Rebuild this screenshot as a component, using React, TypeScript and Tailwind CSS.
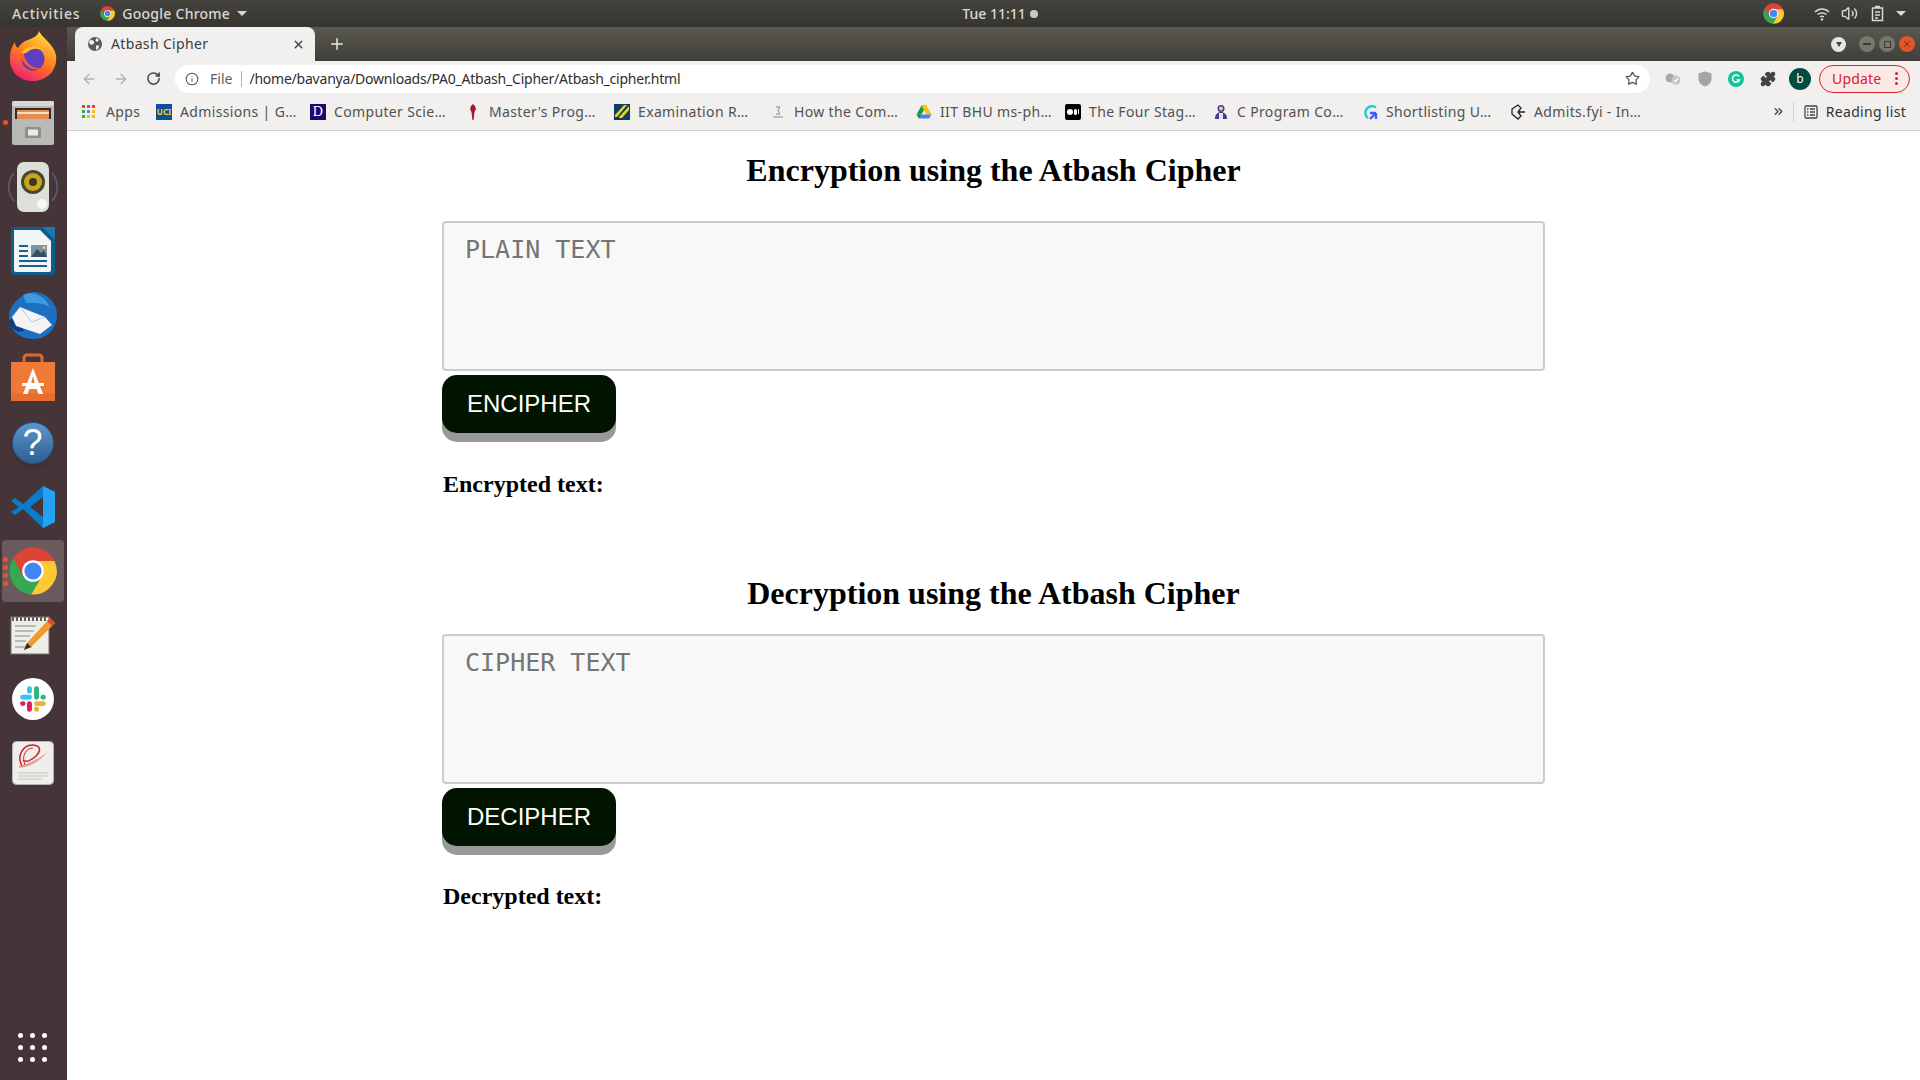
import { useId } from 'react'
import { ArrowLeft, ArrowRight, RotateCw, Star, Info, X, Plus, Puzzle, ChevronsRight, Volume2 } from 'lucide-react'

const ui = "font-['Noto_Sans',sans-serif]"

const ChromeLogo = ({ size }: { size: number }) => (
  <svg width={size} height={size} viewBox="0 0 48 48">
    <path d="M24 14H45.5A23.5 23.5 0 0 0 4.2 11.5L14 29Z" fill="#db4437" />
    <path d="M24 14H45.5A23.5 23.5 0 0 1 22 47.4L33 29Z" fill="#fcc934" />
    <path d="M4.2 11.5A23.5 23.5 0 0 0 22 47.4L33 29H14Z" fill="#34a853" />
    <circle cx="24" cy="24" r="10.8" fill="#fff" />
    <circle cx="24" cy="24" r="8.6" fill="#4285f4" />
  </svg>
)

const Firefox = () => {
  const id = useId()
  return (
    <svg className="mb-[6px]" width="48" height="52" viewBox="0 0 48 52">
      <defs>
        <linearGradient id={id} x1="0.7" y1="0" x2="0.2" y2="1">
          <stop offset="0" stopColor="#ffdf3c" />
          <stop offset="0.5" stopColor="#ff7a1f" />
          <stop offset="1" stopColor="#f0167a" />
        </linearGradient>
      </defs>
      <path d="M30 1C33 8 44 13 47 25C49 40 38 51 24 51C10 51 0 41 1 27C1 21 3 16 6 12C6 15 7 17 9 18C11 14 15 11 19 10C24 8 29 6 30 1Z" fill={`url(#${id})`} />
      <circle cx="24" cy="29" r="11.5" fill="#5f3fc0" />
      <path d="M12 24C16 15 29 13 36 22C31 18 24 18 20 21C18 23 15 24 12 24Z" fill="#ffbd2e" />
      <path d="M10 23C13 33 21 43 35 38C24 40 16 33 15 24Z" fill="#ff5a2b" />
    </svg>
  )
}

const Files = () => (
  <svg width="44" height="46" viewBox="0 0 44 46">
    <rect x="1" y="1" width="42" height="44" rx="2" fill="#b9b9b6" />
    <rect x="1" y="1" width="42" height="5" rx="2" fill="#d8d8d6" />
    <rect x="4" y="8" width="36" height="11" fill="#2f2d2b" />
    <rect x="6" y="10" width="32" height="9" fill="#e78a4e" />
    <rect x="6" y="12" width="32" height="2" fill="#f8ddc4" />
    <rect x="14" y="27" width="16" height="11" rx="1" fill="#8f8f8d" />
    <rect x="17" y="29.5" width="10" height="6" fill="#ecebe9" />
  </svg>
)

const Speaker = () => (
  <svg width="52" height="52" viewBox="0 0 52 52">
    <path d="M7 12C0 20 0 32 7 40M45 12C52 20 52 32 45 40" stroke="#5d5f74" strokeWidth="1.5" fill="none" />
    <rect x="10" y="1" width="32" height="50" rx="7" fill="#dfdfda" />
    <circle cx="26" cy="21" r="12" fill="#4b4631" />
    <circle cx="26" cy="21" r="9" fill="#c9a61c" />
    <circle cx="26" cy="21" r="4" fill="#3c3824" />
    <circle cx="35" cy="43" r="5" fill="#f6f6f2" />
  </svg>
)

const Writer = () => (
  <svg width="44" height="50" viewBox="0 0 44 50">
    <path d="M3 1H31L44 14V46A3 3 0 0 1 41 49H3A3 3 0 0 1 0 46V4A3 3 0 0 1 3 1Z" fill="#0f5b8a" />
    <path d="M3 4H29L40 15V44A2 2 0 0 1 38 46H5A2 2 0 0 1 3 44Z" fill="#f2f5f7" />
    <path d="M31 1H44V14Z" fill="#1c77ad" />
    <path d="M8 19H17V21H8ZM8 24H17V26H8ZM8 29H17V31H8ZM8 34H36V36H8ZM8 39H36V41H8Z" fill="#17618f" />
    <rect x="20" y="19" width="16" height="12" fill="#7d93a5" />
    <path d="M20 31L26 23L30 27L33 24L36 31Z" fill="#35505f" />
    <circle cx="33" cy="21.5" r="1.5" fill="#f3c64a" />
  </svg>
)

const Thunderbird = () => (
  <svg width="50" height="50" viewBox="0 0 50 50">
    <path d="M25 2C38 2 49 12 49 25C49 38 39 49 26 49C14 49 4 44 1 30C0 18 8 6 25 2Z" fill="#1d6fc0" />
    <path d="M15 5C24 0 38 6 42 18C36 12 27 13 18 13Z" fill="#3a9be0" />
    <path d="M1 30C2 38 9 44 16 41L8 28Z" fill="#0a3f7e" />
    <path d="M12 17L37 27L44 35L32 44L8 36L4 27Z" fill="#f4f4f6" />
    <path d="M12 17L24 32L37 27" stroke="#c4c7d0" strokeWidth="1" fill="none" />
  </svg>
)

const AppStore = () => (
  <svg className="mb-[5px]" width="44" height="48" viewBox="0 0 44 48">
    <path d="M13 11V5A3 3 0 0 1 16 2H28A3 3 0 0 1 31 5V11" stroke="#e2662a" strokeWidth="3" fill="none" />
    <rect x="0" y="9" width="44" height="39" fill="#ef7a38" />
    <rect x="0" y="40" width="44" height="8" fill="#e96d2c" />
    <path d="M22 15L32 41H27.5L25.7 36H18.3L16.5 41H12ZM22 23L19.7 32H24.3Z" fill="#fff" />
    <rect x="11" y="30" width="22" height="3" fill="#fff" />
  </svg>
)

const Help = () => (
  <div className="w-[42px] h-[42px] rounded-full bg-gradient-to-b from-[#5d97c9] to-[#2e5f91] border border-[#2a5584] flex items-center justify-center shadow-md">
    <span className="font-['Liberation_Sans',sans-serif] text-[36px] leading-none text-white">?</span>
  </div>
)

const VSCode = () => (
  <svg width="44" height="44" viewBox="0 0 44 44">
    <path d="M32 1L44 7V37L32 43L12 24L4 30L0 27L8 22L0 16L4 13L12 19Z" fill="#0a7cc9" />
    <path d="M32 1L44 7V37L32 43Z" fill="#23a2f2" />
    <path d="M32 12L19 22L32 32Z" fill="#453539" />
  </svg>
)

const Notepad = () => (
  <svg width="46" height="46" viewBox="0 0 46 46">
    <rect x="1" y="5" width="38" height="37" fill="#eeeee8" stroke="#77776f" />
    <path d="M3 4V9M7 4V9M11 4V9M15 4V9M19 4V9M23 4V9M27 4V9M31 4V9M35 4V9" stroke="#5c5c58" strokeWidth="2" />
    <path d="M5 14H26M5 19H24M5 24H20M5 29H16M5 35H22" stroke="#aaaaa4" strokeWidth="1.5" />
    <path d="M40 6L45 11L21 35L14 38L17 31Z" fill="#f09a2b" />
    <path d="M40 6L45 11L42 14L37 9Z" fill="#d94b3b" />
    <path d="M14 38L17 31L21 35Z" fill="#2d2d2b" />
  </svg>
)

const Slack = () => (
  <div className="w-[42px] h-[42px] rounded-full bg-white flex items-center justify-center">
    <svg width="30" height="30" viewBox="0 0 28 28">
      <rect x="2" y="10" width="11" height="4.6" rx="2.3" fill="#36c5f0" />
      <rect x="8.4" y="2" width="4.6" height="7" rx="2.3" fill="#36c5f0" />
      <rect x="15" y="2" width="4.6" height="12.6" rx="2.3" fill="#2eb67d" />
      <rect x="21" y="10" width="5" height="4.6" rx="2.3" fill="#2eb67d" />
      <rect x="15" y="16" width="11" height="4.6" rx="2.3" fill="#ecb22e" />
      <rect x="15" y="21" width="4.6" height="5" rx="2.3" fill="#ecb22e" />
      <rect x="8.4" y="16" width="4.6" height="10" rx="2.3" fill="#e01e5a" />
      <rect x="2" y="16" width="5" height="4.6" rx="2.3" fill="#e01e5a" />
    </svg>
  </div>
)

const Evince = () => (
  <svg width="42" height="44" viewBox="0 0 42 44">
    <rect x="0.5" y="0.5" width="41" height="43" rx="4" fill="#efeeec" stroke="#b5b5b2" />
    <path d="M6 25C14 24 26 18 36 11C28 20 18 26 8 27Z" fill="#e8a0a0" />
    <path d="M10 25C4 14 12 4 20 4C28 4 30 9 24 15C20 19 14 22 11 19" stroke="#c9242b" strokeWidth="1.5" fill="none" />
    <path d="M13 24C9 15 14 7 21 7" stroke="#c9242b" strokeWidth="1" fill="none" />
    <path d="M6 32H36M6 35H36M6 38H30" stroke="#c4c4c0" strokeWidth="1" />
  </svg>
)

const dockItems = [Firefox, Files, Speaker, Writer, Thunderbird, AppStore, Help, VSCode, null, Notepad, Slack, Evince]

const Dock = () => (
  <aside className="w-[67px] shrink-0 bg-[#453539] flex flex-col items-center">
    {dockItems.map((Icon, i) => (
      <div key={i} className="relative w-full h-16 pr-[2px] flex items-center justify-center">
        {Icon ? <Icon /> : (
          <>
            <div className="absolute left-[2px] right-[3px] top-[1px] bottom-[1px] rounded-[4px] bg-[#6a5a5e]" />
            <div className="absolute left-[3px] top-[18px] flex flex-col gap-[3px]">
              <span className="w-[5px] h-[5px] rounded-full bg-[#e95420]" />
              <span className="w-[5px] h-[5px] rounded-full bg-[#e95420]" />
              <span className="w-[5px] h-[5px] rounded-full bg-[#e95420]" />
              <span className="w-[5px] h-[5px] rounded-full bg-[#e95420]" />
            </div>
            <div className="relative"><ChromeLogo size={48} /></div>
          </>
        )}
        {i === 1 && <span className="absolute left-[3px] top-[29px] w-[5px] h-[5px] rounded-full bg-[#e95420]" />}
      </div>
    ))}
    <div className="mt-auto mb-[18px] pr-[2px] grid grid-cols-3 gap-[7px]">
      {Array.from({ length: 9 }).map((_, i) => (
        <span key={i} className="w-[5px] h-[5px] rounded-full bg-white" />
      ))}
    </div>
  </aside>
)

const TopBar = () => (
  <div className={`h-[27px] bg-gradient-to-b from-[#45433e] to-[#35342f] grid grid-cols-[1fr_auto_1fr] items-center text-[#d9d8d4] text-[14px] font-medium ${ui}`}>
    <div className="flex items-center">
      <span className="ml-[12px] tracking-[0.8px]">Activities</span>
      <span className="ml-[20px]"><ChromeLogo size={15} /></span>
      <span className="ml-[7px] tracking-[0.25px]">Google Chrome</span>
      <span className="ml-[7px] w-0 h-0 border-x-[5px] border-x-transparent border-t-[5px] border-t-[#d9d8d4]" />
    </div>
    <div className="ml-[80px] flex items-center gap-[4px]">
      <span>Tue 11:11</span>
      <span className="w-2 h-2 rounded-full bg-[#c8c8c6]" />
    </div>
    <div className="flex items-center justify-end">
      <ChromeLogo size={21} />
      <svg className="ml-[30px]" width="16" height="16" viewBox="0 0 16 16" fill="none" stroke="#d9d8d4" strokeWidth="1.5">
        <path d="M1 6C5 2 11 2 15 6M3.5 8.5C6 6.5 10 6.5 12.5 8.5M6 11C7 10.2 9 10.2 10 11" />
        <circle cx="8" cy="13.5" r="1.2" fill="#d9d8d4" stroke="none" />
      </svg>
      <Volume2 className="ml-[11px]" size={17} color="#d9d8d4" />
      <svg className="ml-[13px]" width="14" height="17" viewBox="0 0 14 17" fill="none" stroke="#d9d8d4" strokeWidth="1.5">
        <path d="M4 1.5H9M1.5 3H11.5V15.5H1.5ZM4 7H9M4 10H9M4 13H7" />
      </svg>
      <span className="ml-[11px] mr-[14px] w-0 h-0 border-x-[5px] border-x-transparent border-t-[5px] border-t-[#d9d8d4]" />
    </div>
  </div>
)

const TabStrip = () => (
  <div className={`h-[34px] flex bg-gradient-to-b from-[#5a5950] to-[#3f3d38] ${ui}`}>
    <div className="ml-[8px] w-[240px] bg-[#f1f0ee] rounded-t-[8px] flex items-center pl-[12px] pr-[10px] text-[14px] text-[#3c3c3c]">
      <svg width="16" height="16" viewBox="0 0 16 16">
        <circle cx="8" cy="8" r="7" fill="#5a5a5a" />
        <path d="M3 3.5L7 5V7.5L4.5 9L2 7ZM9 2L12 3.5L10.5 6L8.5 5ZM9 9.5H12.5L11 13L9 14Z" fill="#f1f0ee" />
      </svg>
      <span className="ml-[8px] pb-[2px] tracking-[0.35px]">Atbash Cipher</span>
      <X className="ml-auto" size={13} strokeWidth={2.5} color="#444" />
    </div>
    <Plus className="ml-[13px] self-center" size={18} strokeWidth={2} color="#e8e8e4" />
    <div className="ml-auto flex items-center">
      <span className="w-[15px] h-[15px] rounded-full bg-[#e6e5e0] flex items-center justify-center">
        <span className="w-0 h-0 border-x-[3.5px] border-x-transparent border-t-[5px] border-t-[#45433e]" />
      </span>
      <span className="ml-[13px] w-[16px] h-[16px] rounded-full bg-[#77766f] flex items-center justify-center">
        <span className="w-[8px] h-[1.5px] bg-[#3b3a35]" />
      </span>
      <span className="ml-[4px] w-[16px] h-[16px] rounded-full bg-[#77766f] flex items-center justify-center">
        <span className="w-[7px] h-[7px] border border-[#3b3a35]" />
      </span>
      <span className="ml-[4px] mr-[5px] w-[16px] h-[16px] rounded-full bg-[#e2542a] flex items-center justify-center">
        <X size={10} strokeWidth={2} color="#5c2a15" />
      </span>
    </div>
  </div>
)

const Toolbar = () => (
  <div className={`h-[35px] bg-[#f1f0ee] flex items-center ${ui}`}>
    <ArrowLeft className="ml-[14px]" size={16} strokeWidth={2} color="#b0b0b0" />
    <ArrowRight className="ml-[16px]" size={16} strokeWidth={2} color="#b0b0b0" />
    <RotateCw className="ml-[17px]" size={15} strokeWidth={2.4} color="#444" />
    <div className="ml-[14px] w-[1475px] h-[28px] rounded-full bg-white flex items-center text-[14px]">
      <Info className="ml-[10px]" size={14} strokeWidth={1.8} color="#555" />
      <span className="ml-[11px] text-[#5f5f5f]">File</span>
      <span className="ml-[9px] w-px h-[16px] bg-[#b0b0b0]" />
      <span className="ml-[7px] text-[#2e2e2e] tracking-[-0.22px]">/home/bavanya/Downloads/PA0_Atbash_Cipher/Atbash_cipher.html</span>
      <Star className="ml-auto mr-[10px]" size={15} strokeWidth={2} color="#555" />
    </div>
    <svg className="ml-[15px]" width="16" height="12" viewBox="0 0 16 12">
      <circle cx="5" cy="5" r="4.5" fill="#a8a8a8" />
      <circle cx="11" cy="7" r="4.5" fill="#c4c4c4" />
      <path d="M9 7L10.5 8.5L13 5.5" stroke="#fff" strokeWidth="1.2" fill="none" />
    </svg>
    <svg className="ml-[17px]" width="14" height="16" viewBox="0 0 14 16">
      <path d="M7 0.5L13.5 2.5V8C13.5 12 10 14.5 7 15.5C4 14.5 0.5 12 0.5 8V2.5Z" fill="#a5a5a5" />
    </svg>
    <div className="ml-[16px] w-[16px] h-[16px] rounded-full bg-[#15c39a] flex items-center justify-center">
      <svg width="10" height="10" viewBox="0 0 10 10" fill="none" stroke="#fff" strokeWidth="1.5">
        <path d="M8 2.5A3.6 3.6 0 1 0 8.5 6H5.5" />
      </svg>
    </div>
    <Puzzle className="ml-[16px]" size={16} color="#444" fill="#444" />
    <div className="ml-[13px] w-[22px] h-[22px] rounded-full bg-[#004d40] text-white text-[12px] flex items-center justify-center">b</div>
    <div className="ml-[8px] w-[91px] h-[28px] rounded-full border border-[#d8232a] bg-[#fbe9e7] flex items-center text-[14px] text-[#d8232a]">
      <span className="ml-[12px] tracking-[0.2px]">Update</span>
      <span className="ml-auto mr-[11px] flex flex-col gap-[2px]">
        <span className="w-[3px] h-[3px] rounded-full bg-[#d8232a]" />
        <span className="w-[3px] h-[3px] rounded-full bg-[#d8232a]" />
        <span className="w-[3px] h-[3px] rounded-full bg-[#d8232a]" />
      </span>
    </div>
  </div>
)

const AppsIcon = () => {
  const colors = ['#ea4335', '#ea4335', '#ea4335', '#34a853', '#4285f4', '#fbbc05', '#34a853', '#fbbc05', '#fbbc05']
  return (
    <span className="grid grid-cols-3 gap-[2px]">
      {colors.map((c, i) => (
        <span key={i} className="w-[3px] h-[3px]" style={{ background: c }} />
      ))}
    </span>
  )
}

const bookmarks = [
  {
    label: 'Admissions | G…',
    width: 'w-[154px]',
    icon: (
      <span className="w-4 h-4 bg-[#0b4ea2] flex items-center justify-center text-[8px] font-bold text-[#ffd200] leading-none tracking-normal">UCI</span>
    ),
  },
  {
    label: 'Computer Scie…',
    width: 'w-[155px]',
    icon: (
      <span className="w-4 h-4 bg-[#1b0a6b] flex items-center justify-center text-[14px] text-white leading-none font-['Liberation_Serif',serif]">D</span>
    ),
  },
  {
    label: "Master's Prog…",
    width: 'w-[149px]',
    icon: (
      <svg width="16" height="16" viewBox="0 0 16 16" fill="#a6192e">
        <path d="M8 0L10 2L11 5L9.5 8L8.6 16H7.4L6.5 8L5 5L6 2Z" />
      </svg>
    ),
  },
  {
    label: 'Examination R…',
    width: 'w-[156px]',
    icon: (
      <svg width="16" height="16" viewBox="0 0 16 16">
        <rect width="16" height="16" fill="#123a5c" />
        <path d="M1 11L10 1H13L3 13H1ZM5 13L15 2V6L8 14H5Z" fill="#e6d31e" />
      </svg>
    ),
  },
  {
    label: 'How the Com…',
    width: 'w-[146px]',
    icon: (
      <svg width="16" height="16" viewBox="0 0 16 16" fill="none" stroke="#888" strokeWidth="1">
        <path d="M6 3H10L8 6.5L10 10H6M3 13H13" />
      </svg>
    ),
  },
  {
    label: 'IIT BHU ms-ph…',
    width: 'w-[149px]',
    icon: (
      <svg width="16" height="16" viewBox="0 0 16 16">
        <path d="M5.5 1.5H10.5L8 6L5.5 10.5H0.5Z" fill="#0f9d58" />
        <path d="M5.5 1.5H10.5L15.5 10.5H10.5Z" fill="#ffc107" />
        <path d="M3 14.5L5.5 10.5H15.5L13 14.5Z" fill="#4285f4" />
        <path d="M0.5 10.5H5.5L3 14.5Z" fill="#188038" />
      </svg>
    ),
  },
  {
    label: 'The Four Stag…',
    width: 'w-[148px]',
    icon: (
      <span className="w-4 h-4 rounded-[2px] bg-black flex items-center justify-center gap-px">
        <span className="w-[6px] h-[6px] rounded-full bg-white" />
        <span className="w-[3px] h-[6px] rounded-full bg-white" />
        <span className="w-px h-[5px] bg-white" />
      </span>
    ),
  },
  {
    label: 'C Program Co…',
    width: 'w-[149px]',
    icon: (
      <svg width="16" height="16" viewBox="0 0 16 16">
        <circle cx="8" cy="4.5" r="3.5" fill="#4b3a8c" />
        <path d="M2 15C2 10 5 8 8 8C11 8 14 10 14 15Z" fill="#4b3a8c" />
        <path d="M6 9H10V15H6Z" fill="#dfe6f3" />
        <circle cx="8" cy="4.5" r="2" fill="#f2c8a8" />
      </svg>
    ),
  },
  {
    label: 'Shortlisting U…',
    width: 'w-[148px]',
    icon: (
      <svg width="16" height="16" viewBox="0 0 16 16" fill="none" strokeWidth="2.4">
        <path d="M14 3.5A6.5 6.5 0 1 0 6 14" stroke="#21c8d8" />
        <path d="M8 9L14 9M14 9V15M14 9L8 15" stroke="#3d5afe" />
      </svg>
    ),
  },
  {
    label: 'Admits.fyi - In…',
    width: 'w-[148px]',
    icon: (
      <svg width="16" height="16" viewBox="0 0 16 16" fill="none" stroke="#222" strokeWidth="1.3">
        <path d="M8 1L2 5V10L8 15L11 12L8 8L11 4ZM8 8H15" />
      </svg>
    ),
  },
]

const BookmarksBar = () => (
  <div className={`h-[35px] pb-[3px] bg-[#f1f0ee] border-b border-[#d0cfcd] flex items-center text-[14px] text-[#505050] tracking-[0.35px] ${ui}`}>
    <span className="ml-[15px]"><AppsIcon /></span>
    <span className="ml-[11px] w-[50px]">Apps</span>
    <div className="flex">
      {bookmarks.map((b) => (
        <div key={b.label} className={`${b.width} flex items-center gap-[8px] whitespace-nowrap`}>
          <span className="shrink-0 flex">{b.icon}</span>
          <span>{b.label}</span>
        </div>
      ))}
    </div>
    <ChevronsRight className="ml-auto" size={13} strokeWidth={2.4} color="#444" />
    <span className="ml-[8px] w-px h-[20px] bg-[#cfcfcd]" />
    <svg className="ml-[10px]" width="14" height="14" viewBox="0 0 14 14" fill="none" stroke="#444" strokeWidth="1.3">
      <rect x="1" y="1" width="12" height="12" rx="1" />
      <path d="M3 4H4.5M6 4H11M3 7H4.5M6 7H11M3 10H4.5M6 10H11" />
    </svg>
    <span className="ml-[8px] mr-[14px] text-[#333] tracking-[0.3px]">Reading list</span>
  </div>
)

const CipherSection = ({
  title,
  placeholder,
  action,
  result,
  fieldGap,
  resultGap,
}: {
  title: string
  placeholder: string
  action: string
  result: string
  fieldGap: string
  resultGap: string
}) => (
  <section className="w-[1103px]">
    <h2 className="text-[32px] leading-[37px] font-bold text-center text-black">{title}</h2>
    <textarea
      readOnly
      placeholder={placeholder}
      className={`block ${fieldGap} w-full h-[150px] resize-none rounded-[4px] border-2 border-[#ccc] bg-[#f8f8f8] pl-[21px] pr-[20px] pt-[8px] pb-[12px] text-[25px] font-['DejaVu_Sans_Mono',monospace] placeholder:text-[#757575] outline-none`}
    />
    <button className="block mt-[4px] w-[174px] h-[58px] rounded-[15px] bg-[#001400] text-white text-[24px] shadow-[0_9px_0_#999] font-['Liberation_Sans',sans-serif]">
      {action}
    </button>
    <p className={`${resultGap} pl-[1px] text-[24px] leading-[27px] font-bold text-black`}>{result}</p>
  </section>
)

export default function App() {
  return (
    <div className="w-[1920px] h-[1080px] overflow-hidden flex flex-col bg-white font-['Liberation_Serif',serif]">
      <TopBar />
      <div className="flex-1 flex min-h-0">
        <Dock />
        <div className="flex-1 flex flex-col min-w-0">
          <TabStrip />
          <Toolbar />
          <BookmarksBar />
          <main className="flex-1 flex flex-col items-center pt-[21px] gap-[77px]">
            <CipherSection
              title="Encryption using the Atbash Cipher"
              placeholder="PLAIN TEXT"
              action="ENCIPHER"
              result="Encrypted text:"
              fieldGap="mt-[32px]"
              resultGap="mt-[38px]"
            />
            <CipherSection
              title="Decryption using the Atbash Cipher"
              placeholder="CIPHER TEXT"
              action="DECIPHER"
              result="Decrypted text:"
              fieldGap="mt-[22px]"
              resultGap="mt-[37px]"
            />
          </main>
        </div>
      </div>
    </div>
  )
}
